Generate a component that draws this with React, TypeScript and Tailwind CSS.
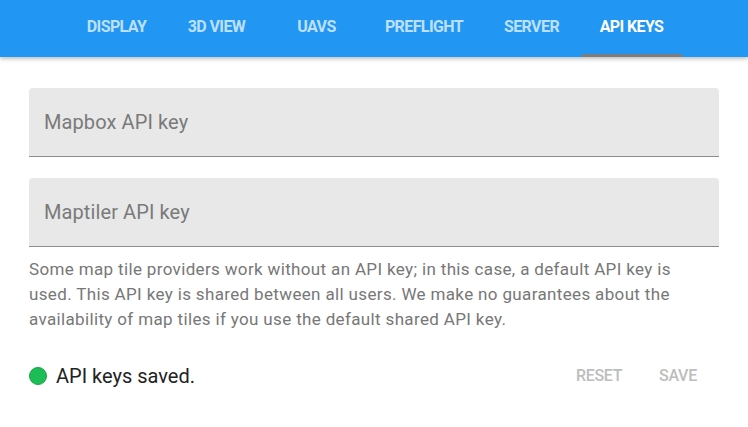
import React from 'react';

const tabs = [
  { label: 'DISPLAY', width: 'w-[100px]' },
  { label: '3D VIEW', width: 'w-[100px]' },
  { label: 'UAVS', width: 'w-[100px]' },
  { label: 'PREFLIGHT', width: 'w-[115px]' },
  { label: 'SERVER', width: 'w-[100px]' },
  { label: 'API KEYS', width: 'w-[100px]', active: true },
];

const FilledField: React.FC<{ label: string }> = ({ label }) => (
  <div className="h-[69px] bg-[#e8e8e8] rounded-t-[4px] border-b border-[#8c8c8c] flex items-center px-[15px]">
    <span className="text-[20px] text-[#7a7a7a] tracking-[0.1px]">{label}</span>
  </div>
);

const App: React.FC = () => {
  return (
    <div className="w-[748px] h-[427px] bg-white overflow-hidden font-['Roboto','Liberation_Sans',sans-serif]">
      {/* Tab bar */}
      <div className="h-[57px] bg-[#2196f3] flex justify-center items-stretch shadow-[0_2px_4px_rgba(0,0,0,0.25)] relative z-10">
        {tabs.map(t => (
          <div key={t.label} className={`${t.width} flex flex-col`}>
            <div
              className={`flex-1 flex items-center justify-center text-[16px] font-bold tracking-[-0.6px] ${
                t.active ? 'text-white' : 'text-[#bfe0fc]'
              }`}
            >
              {t.label}
            </div>
            <div className={`h-[3px] ${t.active ? 'bg-[#7d7d7d]' : 'bg-transparent'}`} />
          </div>
        ))}
      </div>

      {/* Content */}
      <div className="px-[29px] pt-[31px]">
        <div className="flex flex-col gap-[21px]">
          <FilledField label="Mapbox API key" />
          <FilledField label="Maptiler API key" />
        </div>

        <p className="mt-[10px] max-w-[660px] text-[17px] leading-[25px] text-[#777777] tracking-[0.35px]">
          Some map tile providers work without an API key; in this case, a default API key is used. This API key is shared between all users. We make no guarantees about the availability of map tiles if you use the default shared API key.
        </p>

        <div className="mt-[26px] h-[36px] flex items-center">
          <span className="w-[18px] h-[18px] rounded-full bg-[#1dbd55] border border-[#17a449]" />
          <span className="ml-[9px] text-[20px] text-[#222222]">API keys saved.</span>
          <div className="ml-auto mr-[9px] flex gap-[15px]">
            <button className="w-[64px] h-[36px] text-[16px] font-medium text-[#bdbdbd] tracking-[-0.3px]">RESET</button>
            <button className="w-[64px] h-[36px] text-[16px] font-medium text-[#bdbdbd] tracking-[-0.3px]">SAVE</button>
          </div>
        </div>
      </div>
    </div>
  );
};

export default App;
